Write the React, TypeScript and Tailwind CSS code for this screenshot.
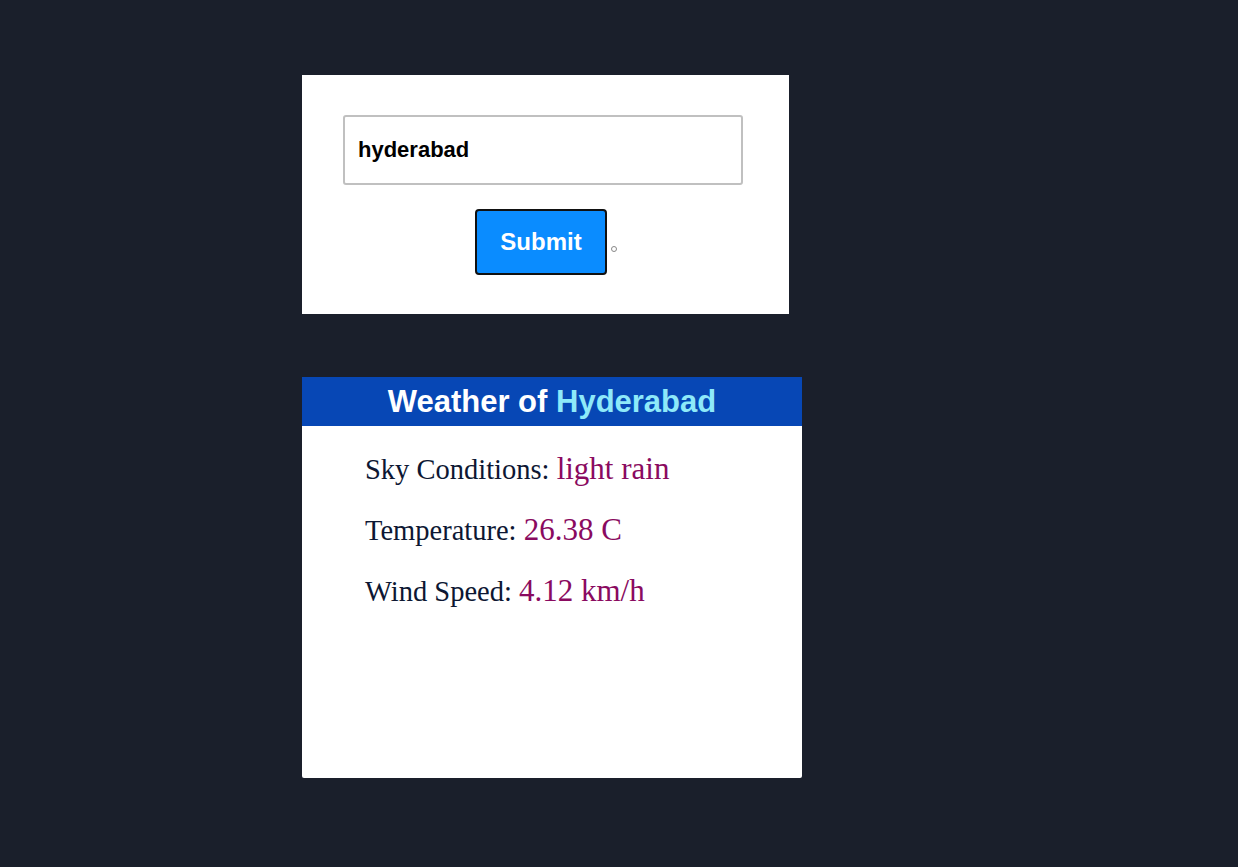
import React from "react";

export default function App() {
  return (
    <div className="min-h-screen w-full bg-[#1a1f2b] pl-[302px] pt-[75px] pb-[89px]">
      <div className="flex flex-col gap-[63px]">
        <div className="w-[487px] h-[239px] bg-white pl-[41px] pt-[40px]">
          <div className="w-[400px] h-[70px] border-2 border-[#c0c0c0] rounded-[3px] flex items-center pl-[13px] pb-[1px]">
            <span className="text-[22px] font-bold text-black font-['Liberation_Sans',Arial,sans-serif]">
              hyderabad
            </span>
          </div>
          <div className="mt-[24px] flex items-center w-[400px] pl-[132px]">
            <button className="w-[132px] h-[66px] bg-[#0a8cff] border-2 border-[#111] rounded-[4px] text-white text-[24px] font-bold font-['Liberation_Sans',Arial,sans-serif]">
              Submit
            </button>
            <span className="ml-[4px] mt-[14px] w-[6px] h-[6px] rounded-full border border-[#888]"></span>
          </div>
        </div>

        <div className="w-[500px] h-[401px] bg-white rounded-b-[2px]">
          <div className="h-[49px] bg-[#0747b5] flex items-center justify-center">
            <h1 className="text-[31px] font-bold leading-none text-white font-['Liberation_Sans',Arial,sans-serif]">
              Weather of <span className="text-[#8ee9f9]">Hyderabad</span>
            </h1>
          </div>
          <div className="pl-[63px] pt-[24px] flex flex-col gap-[22px] font-['Liberation_Serif','Times_New_Roman',serif]">
            <p className="text-[28.5px] leading-[38px] text-[#0d1733]">
              Sky Conditions: <span className="text-[31px] text-[#8a0a60]">light rain</span>
            </p>
            <p className="text-[28.5px] leading-[38px] text-[#0d1733]">
              Temperature: <span className="text-[31px] text-[#8a0a60]">26.38 C</span>
            </p>
            <p className="text-[28.5px] leading-[38px] text-[#0d1733]">
              Wind Speed: <span className="text-[31px] text-[#8a0a60]">4.12 km/h</span>
            </p>
          </div>
        </div>
      </div>
    </div>
  );
}
